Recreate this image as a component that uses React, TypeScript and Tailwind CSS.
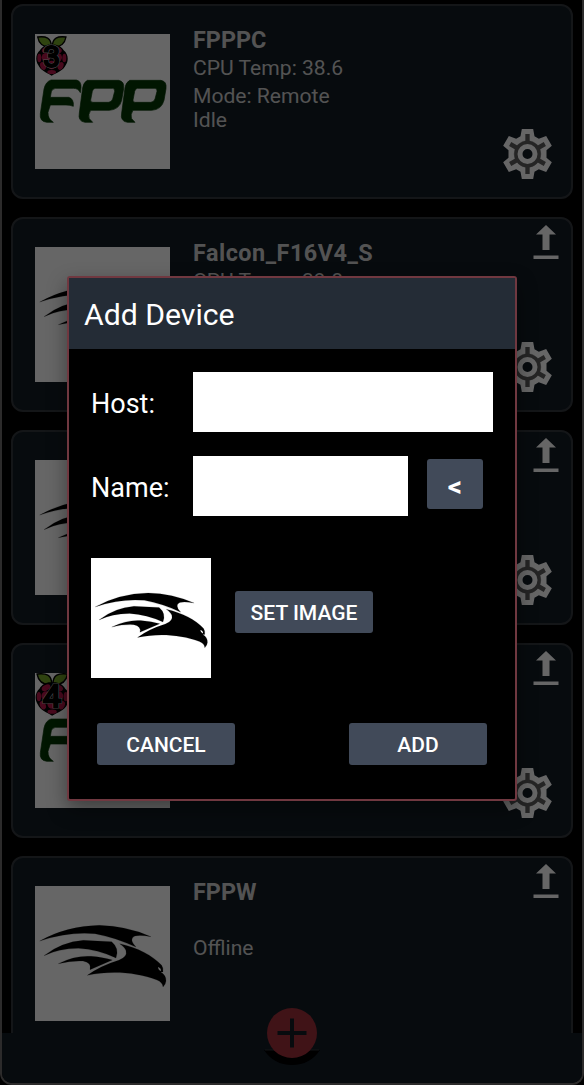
import React from "react";

function Falcon() {
  return (
    <svg viewBox="45 48 405 405" className="block h-full w-full" fill="#000" stroke="#000" strokeWidth="0.5">
      <path d="M59 213 Q140 168 238 166 Q320 168 393 200 Q360 194 345 198 Q325 207 348 231 Q285 202 225 191 Q145 184 59 213Z" />
      <path d="M72 257 Q125 216 190 211 L275 215 Q299 235 288 264 Q235 239 175 235 Q115 236 72 257Z" />
      <path d="M115 281 Q165 256 213 259 Q250 262 277 270 L210 299 Q216 278 189 273 Q155 271 115 281Z" />
      <path d="M299 221 C355 234 397 256 425 286 Q431 295 429 306 L422 306 Q439 316 438 333 Q437 344 429 351 Q428 337 411 330 C350 306 270 301 202 316 Q243 287 296 271 Q323 260 318 242 Q315 232 299 221Z" />
      <path d="M414 291 Q424 294 423 303 Q415 301 414 291Z" fill="#fff" stroke="none" />
    </svg>
  );
}

function Berry({ digit }: { digit: string }) {
  return (
    <svg viewBox="0 0 96 120" className="h-full w-full">
      <g stroke="#000" strokeWidth="4" fill="#75a928">
        <path d="M46 32 C24 34 9 25 5 3 C30 0 46 5 46 32Z" />
        <path d="M49 32 C71 34 86 25 90 3 C65 0 49 5 49 32Z" />
      </g>
      <path d="M47 26 C62 24 77 31 83 43 C98 55 98 75 89 88 C82 104 63 110 47 119 C32 110 14 104 7 88 C-2 75 -2 55 12 43 C19 31 32 24 47 26Z" fill="#000" />
      <g fill="#b5174a">
        <ellipse cx="30" cy="41" rx="13" ry="8" transform="rotate(-28 30 41)" />
        <ellipse cx="65" cy="41" rx="13" ry="8" transform="rotate(28 65 41)" />
        <ellipse cx="10" cy="66" rx="6" ry="13" />
        <ellipse cx="85" cy="66" rx="6" ry="13" />
        <circle cx="30" cy="64" r="13" />
        <circle cx="65" cy="64" r="13" />
        <circle cx="47" cy="87" r="13" />
        <ellipse cx="21" cy="90" rx="8" ry="12" transform="rotate(-25 21 90)" />
        <ellipse cx="74" cy="90" rx="8" ry="12" transform="rotate(25 74 90)" />
        <ellipse cx="47" cy="108" rx="13" ry="6" />
      </g>
      <text x="47" y="94" textAnchor="middle" fontFamily="Roboto, sans-serif" fontSize="90" fill="#000" stroke="#c8c8c8" strokeWidth="9" paintOrder="stroke">{digit}</text>
      <text x="47" y="94" textAnchor="middle" fontFamily="Roboto, sans-serif" fontSize="90" fill="#000" stroke="#000" strokeWidth="6.5">{digit}</text>
    </svg>
  );
}

function FppMark({ digit }: { digit: string }) {
  const bowl =
    "M262 240 H356 Q374 243 371 265 L365 300 Q358 328 328 330 H272 Q263 343 268 355 L278 366 H255 Q233 363 238 338 L248 262 Q250 247 262 240Z M285 264 Q279 265 277 273 L272 299 Q271 306 279 306 H325 Q335 305 338 296 L344 273 Q345 265 338 264Z";
  return (
    <div className="relative h-full w-full">
      <svg viewBox="105 101 405 405" className="block h-full w-full" fill="#033703" stroke="#033703" strokeWidth="2">
        <path d="M153 239 H229 Q244 242 243 262 L241 277 Q235 264 220 264 H167 Q157 265 154 274 L151 291 H206 Q222 295 220 318 Q211 314 198 314 H151 L144 336 Q143 356 160 366 H140 Q118 363 121 340 L132 266 Q137 244 153 239Z" />
        <path d={bowl} fillRule="evenodd" />
        <path d={bowl} fillRule="evenodd" transform="translate(127 0)" />
      </svg>
      <div className={digit === "3" ? "absolute left-[1px] top-0.5 h-10 w-8" : "absolute left-0 top-0 h-[43px] w-[35px]"}>
        <Berry digit={digit} />
      </div>
    </div>
  );
}

function Gear() {
  return (
    <svg viewBox="101 87 146 150" className="block h-[50px] w-[49px]">
      <path d="M157 87 H191 L195 109 L208 116 L230 108 L247 137 L231 151 V173 L247 187 L230 216 L208 208 L195 215 L191 237 H157 L153 215 L140 208 L118 216 L101 187 L117 173 V151 L101 137 L118 108 L140 116 L153 109Z" fill="#fff" />
      <g fill="#5c5c5c" stroke="#5c5c5c">
        <circle cx="174" cy="162" r="40" />
        <path d="M174 102V222M122 132L226 192M122 192L226 132" strokeWidth="13" />
      </g>
      <circle cx="174" cy="162" r="22.5" fill="#121c25" stroke="#fff" strokeWidth="15" />
    </svg>
  );
}

function Upload() {
  return (
    <svg viewBox="0 0 26 34" className="block h-[34px] w-[26px]" fill="#fff">
      <path d="M13 0 23 9.5H16.5V25H9.5V9.5H3Z" />
      <path d="M.5 30.5H25.5V34H.5Z" />
    </svg>
  );
}

type Device = { name: string; lines: string[]; pi?: string; upload?: boolean; gear?: boolean };

const devices: Device[] = [
  { name: "FPPPC", lines: ["CPU Temp: 38.6", "Mode: Remote", "Idle"], pi: "3", gear: true },
  { name: "Falcon_F16V4_S", lines: ["CPU Temp: 39.8", "", ""], upload: true, gear: true },
  { name: "", lines: ["", "", ""], upload: true, gear: true },
  { name: "", lines: ["", "", ""], pi: "4", upload: true, gear: true },
  { name: "FPPW", lines: ["", "Offline", ""], upload: true },
];

function DeviceCard({ device }: { device: Device }) {
  return (
    <article className="flex h-[195px] shrink-0 rounded-[12px] border-2 border-[#34383e] bg-[#121c25] pl-[22px] pt-7">
      <div className="h-[135px] w-[135px] shrink-0 bg-white">{device.pi ? <FppMark digit={device.pi} /> : <Falcon />}</div>
      <div className="-mt-2 ml-[23px] flex-1 text-[21.1px] text-[#d0d0d0]">
        <h2 className={"h-7 text-[23.4px] font-bold leading-7 " + (device.name.length > 6 ? "tracking-[0.5px]" : "")}>{device.name}</h2>
        <p className="h-7 leading-7">{device.lines[0]}</p>
        <p className="h-[26px] leading-7">{device.lines[1]}</p>
        <p className="h-6 leading-6">{device.lines[2]}</p>
      </div>
      <div className="-mt-7 flex w-[55px] shrink-0 flex-col justify-between pb-[18px] pt-1.5">
        <div className="ml-[17px] h-[34px]">{device.upload && <Upload />}</div>
        <div className="-ml-[13px]">{device.gear && <Gear />}</div>
      </div>
    </article>
  );
}

const button = "flex items-center justify-center rounded-[3px] bg-[#414a59] pt-[3px] text-[21px] font-medium text-white";

export default function App() {
  return (
    <main className="relative h-[1085px] w-[584px] overflow-hidden bg-black font-[Roboto,sans-serif]">
      <div className="flex h-full flex-col rounded-b-[12px] border-x-2 border-b-2 border-[#6f6c6c]">
        <div className="flex h-[1033px] shrink-0 flex-col gap-[18px] overflow-hidden px-[9px] pt-1">
          {devices.map((d, i) => (
            <DeviceCard key={i} device={d} />
          ))}
        </div>
        <footer className="flex-1 rounded-b-[10px] bg-[#121c25]" />
      </div>
      <svg viewBox="0 0 56 60" className="absolute left-[264px] top-[1006px] h-[60px] w-14">
        <path d="M0 44 H56 Q46 59 28 59 Q10 59 0 44Z" fill="#000" />
        <path d="M1 44H55" stroke="#30343a" />
        <circle cx="28" cy="27" r="25" fill="#a0303a" />
        <path d="M28 12.5V41.5M13.5 27H42.5" stroke="#121c25" strokeWidth="4" />
      </svg>
      <div className="absolute inset-0 flex items-start justify-center bg-black/60 pt-[276px]">
        <section className="flex h-[525px] w-[450px] flex-col rounded-[3px] border-2 border-[#703840] bg-black text-white shadow-[0_8px_20px_rgba(0,0,0,0.4)]">
          <header className="flex h-[71px] shrink-0 items-center bg-[#242c36] pl-[15px] pt-0.5 text-[30.2px]">Add Device</header>
          <div className="flex flex-1 flex-col px-[22px] pt-[23px] text-[27px]">
            <label className="flex h-[60px] items-center">
              <span className="w-[102px] pt-1">Host:</span>
              <input className="h-[60px] w-[300px] bg-white" />
            </label>
            <div className="mt-6 flex h-[60px] items-center">
              <span className="w-[102px] pt-1">Name:</span>
              <input className="h-[60px] w-[215px] bg-white" />
              <button className="mb-1 ml-[19px] flex h-[50px] w-14 items-center justify-center rounded-[3px] bg-[#414a59] pt-1.5 text-[28px] font-bold text-white">&lt;</button>
            </div>
            <div className="mt-[42px] flex items-start">
              <div className="h-[120px] w-[120px] bg-white">
                <Falcon />
              </div>
              <button className={button + " ml-6 mt-[33px] h-[42px] w-[138px]"}>SET IMAGE</button>
            </div>
            <div className="mt-[45px] flex justify-between px-1.5">
              <button className={button + " h-[42px] w-[138px]"}>CANCEL</button>
              <button className={button + " h-[42px] w-[138px]"}>ADD</button>
            </div>
          </div>
        </section>
      </div>
    </main>
  );
}
